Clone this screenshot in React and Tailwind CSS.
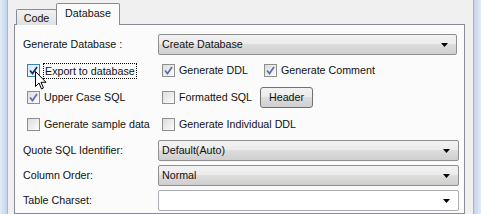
import React from 'react';

const FONT = { fontFamily: '"Liberation Sans", Arial, sans-serif' };

function Arrow() {
  return (
    <svg width="7" height="4" viewBox="0 0 7 4" className="block">
      <path d="M0 0h7L3.5 4z" fill="#000" />
    </svg>
  );
}

function Select({ value, blank }) {
  return (
    <div
      className={
        'h-[21px] flex items-center justify-between pl-[3px] pr-[8px] rounded-[2px] border text-[#111] ' +
        (blank ? 'bg-white border-[#abadb3]' : 'bg-[linear-gradient(#f2f2f2_0%,#ebebeb_50%,#dddddd_50%,#cfcfcf_100%)] border-[#8e8f8f]')
      }
    >
      <span>{value}</span>
      <Arrow />
    </div>
  );
}

function Check({ checked, label, hover, focus }) {
  return (
    <div className="flex items-center gap-[4px]">
      <div
        className={
          'w-[13px] h-[13px] border flex items-center justify-center ' +
          (hover
            ? 'border-[#3c7fb1] bg-[linear-gradient(135deg,#cfe9fa,#fff)]'
            : 'border-[#8e8f8f] bg-[linear-gradient(135deg,#dcdcdc,#fdfdfd)]')
        }
      >
        {checked && (
          <svg width="9" height="9" viewBox="0 0 9 9">
            <path
              d="M1 4.5 3.5 7.5 8 1"
              fill="none"
              stroke={hover ? '#1c2a6b' : '#5a6ea8'}
              strokeWidth="1.7"
            />
          </svg>
        )}
      </div>
      <span className={focus ? 'px-[1px] outline outline-1 outline-dotted outline-black leading-[14px]' : ''}>
        {label}
      </span>
    </div>
  );
}

export default function App() {
  return (
    <div className="w-[481px] h-[214px] overflow-hidden flex bg-[#f0f0f0] text-[10.7px] text-[#111]" style={FONT}>
      <div className="w-[8px] h-full bg-[linear-gradient(90deg,#e3ebf6,#c3d4ea)] border-r border-[#a8b8cc]" />

      <div className="flex-1 flex flex-col pl-[6px] pr-[8px] relative">
        <div className="h-[24px] flex items-end pl-[2px] relative z-10">
          <div className="w-[41px] h-[16px] mb-[-1px] border border-[#898c95] border-b-0 rounded-t-[2px] bg-[linear-gradient(#f2f2f2,#e1e1e1)] flex items-center justify-center pt-[1px]">
            Code
          </div>
          <div className="w-[64px] h-[22px] ml-[-1px] mb-[-1px] border border-[#898c95] border-b-0 rounded-t-[2px] bg-[#fbfbfb] flex items-center justify-center pb-[2px]">
            Database
          </div>
        </div>

        <div className="flex-1 border border-[#898c95] bg-[#fbfbfb] flex flex-col">
          <div className="flex items-center mt-[9px] pl-[8px]">
            <span className="w-[135px]">Generate Database :</span>
            <div className="w-[299px]">
              <Select value="Create Database" />
            </div>
          </div>

          <div className="mt-[2px] pl-[12px] flex flex-col">
            <div className="h-[27px] flex items-center">
              <div className="w-[135px]"><Check checked hover focus label="Export to database" /></div>
              <div className="w-[102px]"><Check checked label="Generate DDL" /></div>
              <Check checked label="Generate Comment" />
            </div>
            <div className="h-[27px] flex items-center">
              <div className="w-[135px]"><Check checked label="Upper Case SQL" /></div>
              <div className="w-[98px]"><Check label="Formatted SQL" /></div>
              <div className="w-[53px] h-[21px] rounded-[3px] border border-[#707070] bg-[linear-gradient(#f2f2f2_0%,#ebebeb_50%,#dddddd_50%,#cfcfcf_100%)] flex items-center justify-center">
                Header
              </div>
            </div>
            <div className="h-[27px] flex items-center">
              <div className="w-[135px]"><Check label="Generate sample data" /></div>
              <Check label="Generate Individual DDL" />
            </div>
          </div>

          <div className="mt-[2px] pl-[8px] flex flex-col gap-[4px]">
            <div className="flex items-center">
              <span className="w-[135px]">Quote SQL Identifier:</span>
              <div className="w-[301px]"><Select value="Default(Auto)" /></div>
            </div>
            <div className="flex items-center">
              <span className="w-[135px]">Column Order:</span>
              <div className="w-[301px]"><Select value="Normal" /></div>
            </div>
            <div className="flex items-center">
              <span className="w-[135px]">Table Charset:</span>
              <div className="w-[301px]"><Select value="" blank /></div>
            </div>
          </div>
        </div>

        <svg
          className="absolute left-[27px] top-[71px]"
          width="12"
          height="19"
          viewBox="0 0 12 19"
        >
          <path
            d="M0.5 0.5v15l3.5-3.5 2.5 6 2-1-2.5-5.7h5z"
            fill="#fff"
            stroke="#000"
            strokeWidth="1"
            strokeLinejoin="round"
          />
        </svg>
      </div>

      <div className="w-[8px] h-full border-l border-[#a8b8cc] bg-[linear-gradient(90deg,#c3d4ea,#e3ebf6)]" />
    </div>
  );
}
